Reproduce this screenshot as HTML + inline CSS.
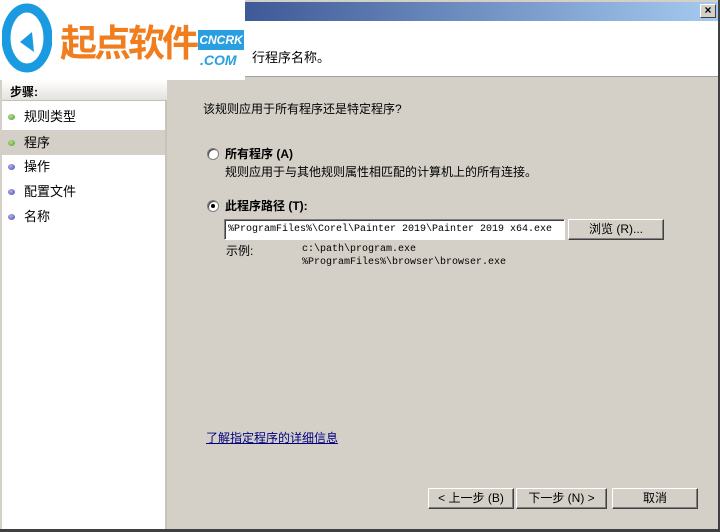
<!DOCTYPE html>
<html><head><meta charset="utf-8"><style>
*{margin:0;padding:0;box-sizing:border-box}
body{width:720px;height:532px;background:#d4d0c8;position:relative;overflow:hidden;font-family:"Liberation Sans","Noto Sans CJK SC","WenQuanYi Zen Hei",sans-serif;font-size:12px;color:#000}
.a{position:absolute}
.title{left:0;top:2px;width:720px;height:19px;background:linear-gradient(90deg,#0a246a,#3f5b98 35%,#a6caf0)}
.x{right:4px;top:4px;width:16px;height:14px;background:#d4d0c8;border:1px solid;border-color:#fff #404040 #404040 #fff;font-size:12px;line-height:11px;text-align:center;font-weight:bold}
.hdr{left:0;top:21px;width:718px;height:56px;background:#fff;border-bottom:1px solid #a0a0a0}
.left{left:2px;top:80px;width:165px;height:449px;background:#fff;border-right:2px solid #c8c4bc}
.steps{left:2px;top:80px;width:165px;height:21px;background:linear-gradient(#fff,#e4e2dc);border-bottom:1px solid #c0c0c0;font-weight:bold;padding:3px 8px}
.it{left:2px;width:163px;height:25px;line-height:25px;padding-left:22px;font-size:13px}
.dot{position:absolute;left:6px;top:10px;width:7px;height:6px;border-radius:50%}
.g{background:radial-gradient(circle at 40% 35%,#b6e08a,#4a9a2a)}
.p{background:radial-gradient(circle at 40% 35%,#b0b0f0,#4848a8)}
.btn{height:21px;background:#d4d0c8;border:1px solid;border-color:#fff #404040 #404040 #fff;box-shadow:inset -1px -1px #808080;text-align:center;line-height:18px;font-size:12px}
.mono{font-family:"Liberation Mono","Noto Sans CJK SC",monospace;font-size:10px}
.radio{width:12px;height:12px;border-radius:50%;background:#fff;border:1px solid #808080;box-shadow:inset 1px 1px #404040}
</style></head><body>
<div class="a title"></div>
<div class="a x">×</div>
<div class="a hdr"></div>
<div class="a" style="left:252px;top:47px;font-size:13px">行程序名称。</div>
<div class="a" style="left:0;top:0;width:245px;height:80px;background:#fff"></div>
<svg class="a" style="left:2px;top:2px" width="50" height="72" viewBox="0 0 50 72"><ellipse cx="25" cy="36" rx="21" ry="30" fill="none" stroke="#1a9ae0" stroke-width="9"/><path d="M18 40 L30 30 L32 50 Z" fill="#1a9ae0"/></svg>
<div class="a" style="left:60px;top:22px;font-size:37px;font-weight:bold;color:#f07d1e;letter-spacing:-3px;line-height:44px">起点软件</div>
<div class="a" style="left:198px;top:30px;width:46px;height:20px;background:#2a9fe0;color:#fff;font-size:12px;font-weight:bold;font-style:italic;text-align:center;line-height:20px">CNCRK</div>
<div class="a" style="left:200px;top:52px;color:#2a9fe0;font-size:14px;font-weight:bold;font-style:italic">.COM</div>
<div class="a left"></div>
<div class="a steps">步骤:</div>
<div class="a it" style="top:104px"><span class="dot g"></span>规则类型</div>
<div class="a it" style="top:130px;background:#d4d0c8"><span class="dot g"></span>程序</div>
<div class="a it" style="top:154px"><span class="dot p"></span>操作</div>
<div class="a it" style="top:179px"><span class="dot p"></span>配置文件</div>
<div class="a it" style="top:204px"><span class="dot p"></span>名称</div>
<div class="a" style="left:203px;top:100px;font-size:12px">该规则应用于所有程序还是特定程序?</div>
<div class="a radio" style="left:207px;top:148px"></div>
<div class="a" style="left:225px;top:145px;font-weight:bold;font-size:12px">所有程序 (A)</div>
<div class="a" style="left:225px;top:163px">规则应用于与其他规则属性相匹配的计算机上的所有连接。</div>
<div class="a radio" style="left:207px;top:200px"><div style="position:absolute;left:3px;top:3px;width:4px;height:4px;background:#000;border-radius:50%"></div></div>
<div class="a" style="left:225px;top:197px;font-weight:bold">此程序路径 (T):</div>
<div class="a mono" style="left:224px;top:219px;width:341px;height:21px;background:#fff;border:1px solid;border-color:#808080 #fff #fff #808080;box-shadow:inset 1px 1px #404040;padding:4px 3px;white-space:nowrap">%ProgramFiles%\Corel\Painter 2019\Painter 2019 x64.exe</div>
<div class="a btn" style="left:568px;top:219px;width:96px">浏览 (R)...</div>
<div class="a" style="left:226px;top:242px">示例:</div>
<div class="a mono" style="left:302px;top:243px;line-height:13px">c:\path\program.exe<br>%ProgramFiles%\browser\browser.exe</div>
<div class="a" style="left:206px;top:429px;color:#000080;text-decoration:underline">了解指定程序的详细信息</div>
<div class="a btn" style="left:428px;top:488px;width:86px">&lt; 上一步 (B)</div>
<div class="a btn" style="left:516px;top:488px;width:91px">下一步 (N) &gt;</div>
<div class="a btn" style="left:612px;top:488px;width:86px">取消</div>
<div class="a" style="left:0;top:529px;width:720px;height:3px;background:#404040"></div>
<div class="a" style="left:718px;top:0;width:2px;height:532px;background:#404040"></div>
</body></html>
